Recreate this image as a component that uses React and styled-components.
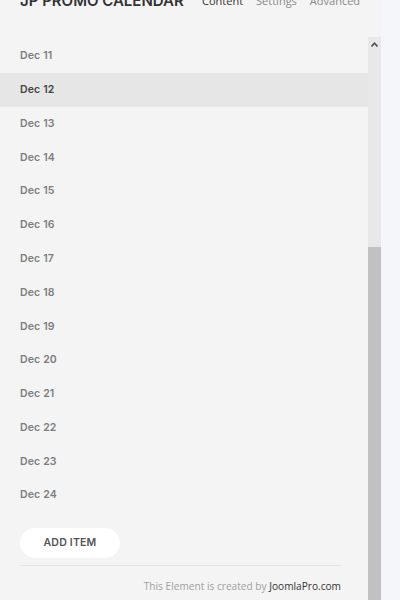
import React from "react";
import styled, { createGlobalStyle } from "styled-components";

const Global = createGlobalStyle`
  html, body { margin: 0; padding: 0; }
  body { background: #f5f6fa; overflow: hidden; font-family: "Open Sans", sans-serif; }
`;

const Page = styled.div`
  width: 400px;
  height: 600px;
  display: flex;
  overflow: hidden;
`;

const Panel = styled.div`
  width: 381px;
  height: 600px;
  background: #f4f4f4;
  display: flex;
  flex-direction: column;
`;

const Header = styled.div`
  height: 46px;
  margin-top: -9px;
  padding: 0 20px;
  display: flex;
  align-items: flex-start;
  flex-shrink: 0;
`;

const Title = styled.div`
  width: 182px;
  font-family: Inter, sans-serif;
  font-weight: 600;
  font-size: 15px;
  line-height: 20px;
  color: #333;
  letter-spacing: 0px;
  white-space: nowrap;
`;

const Tabs = styled.div`
  display: flex;
  gap: 13px;
`;

const Tab = styled.div`
  font-family: "Open Sans", sans-serif;
  font-size: 11px;
  line-height: 20px;
  color: ${(p) => (p.$active ? "#333" : "#888")};
  white-space: nowrap;
`;

const Body = styled.div`
  flex: 1;
  display: flex;
  min-height: 0;
`;

const Content = styled.div`
  flex: 1;
  display: flex;
  flex-direction: column;
  padding-top: 2px;
`;

const Row = styled.div`
  height: 33.77px;
  flex-shrink: 0;
  display: flex;
  align-items: center;
  padding-left: 20px;
  background: ${(p) => (p.$active ? "#e6e6e6" : "transparent")};
  font-family: Inter, sans-serif;
  font-weight: 600;
  font-size: 10.5px;
  letter-spacing: 0.15px;
  color: ${(p) => (p.$active ? "#444" : "#7d7d7d")};
`;

const Bottom = styled.div`
  padding: 16px 27px 0 20px;
  display: flex;
  flex-direction: column;
`;

const AddButton = styled.button`
  width: 100px;
  height: 30px;
  border: none;
  border-radius: 15px;
  background: #fff;
  font-family: Inter, sans-serif;
  font-weight: 600;
  font-size: 10.5px;
  letter-spacing: 0.2px;
  color: #555;
  padding: 0;
`;

const Divider = styled.div`
  height: 1px;
  background: #e4e4e4;
  margin-top: 7px;
`;

const Footer = styled.div`
  margin-top: 13px;
  text-align: right;
  font-family: "Open Sans", sans-serif;
  font-size: 10.15px;
  color: #a0a0a0;
  white-space: nowrap;
  & b { font-weight: 400; color: #333; }
`;

const Scrollbar = styled.div`
  width: 13px;
  background: #e8e8e8;
  display: flex;
  flex-direction: column;
  align-items: center;
`;

const Arrow = styled.div`
  height: 210px;
  padding-top: 5px;
  box-sizing: border-box;
  display: flex;
  justify-content: center;
`;

const Thumb = styled.div`
  flex: 1;
  width: 13px;
  background: #c1c1c1;
`;

const days = Array.from({ length: 14 }, (_, i) => 11 + i);

export default function App() {
  return (
    <>
      <Global />
      <Page>
        <Panel>
          <Header>
            <Title>JP PROMO CALENDAR</Title>
            <Tabs>
              <Tab $active>Content</Tab>
              <Tab>Settings</Tab>
              <Tab>Advanced</Tab>
            </Tabs>
          </Header>
          <Body>
            <Content>
              {days.map((d) => (
                <Row key={d} $active={d === 12}>Dec {d}</Row>
              ))}
              <Bottom>
                <div><AddButton>ADD ITEM</AddButton></div>
                <Divider />
                <Footer>This Element is created by <b>JoomlaPro.com</b></Footer>
              </Bottom>
            </Content>
            <Scrollbar>
              <Arrow>
                <svg width="7" height="5" viewBox="0 0 7 5">
                  <path d="M0.5 4.5 L3.5 1.2 L6.5 4.5" fill="none" stroke="#505050" strokeWidth="1.6" />
                </svg>
              </Arrow>
              <Thumb />
            </Scrollbar>
          </Body>
        </Panel>
      </Page>
    </>
  );
}
